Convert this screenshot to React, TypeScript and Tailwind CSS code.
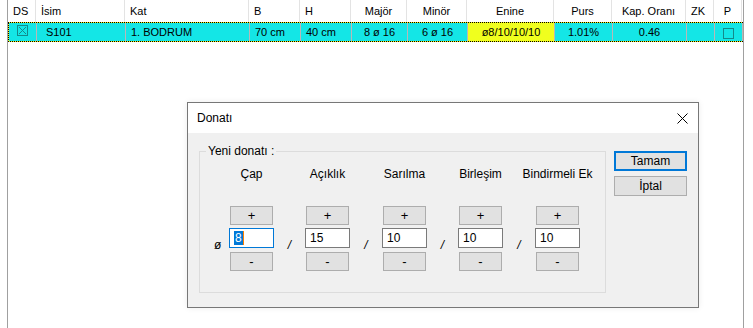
import React from 'react';

const cols = [
  { key: 'ds', title: 'DS', w: 'w-[28px]', align: 'left' },
  { key: 'isim', title: 'İsim', w: 'w-[89px]', align: 'left' },
  { key: 'kat', title: 'Kat', w: 'w-[124px]', align: 'left' },
  { key: 'b', title: 'B', w: 'w-[51px]', align: 'left' },
  { key: 'h', title: 'H', w: 'w-[51px]', align: 'left' },
  { key: 'major', title: 'Majör', w: 'w-[56px]', align: 'center' },
  { key: 'minor', title: 'Minör', w: 'w-[60px]', align: 'center' },
  { key: 'enine', title: 'Enine', w: 'w-[87px]', align: 'center' },
  { key: 'purs', title: 'Purs', w: 'w-[58px]', align: 'center' },
  { key: 'kap', title: 'Kap. Oranı', w: 'w-[74px]', align: 'center' },
  { key: 'zk', title: 'ZK', w: 'w-[28px]', align: 'left' },
  { key: 'p', title: 'P', w: 'w-[28px]', align: 'center' },
];

const row: Record<string, string> = {
  isim: 'S101',
  kat: '1. BODRUM',
  b: '70 cm',
  h: '40 cm',
  major: '8 ø 16',
  minor: '6 ø 16',
  enine: 'ø8/10/10/10',
  purs: '1.01%',
  kap: '0.46',
  zk: '',
};

const fields = [
  { label: 'Çap', value: '8', focus: true },
  { label: 'Açıklık', value: '15' },
  { label: 'Sarılma', value: '10' },
  { label: 'Birleşim', value: '10' },
  { label: 'Bindirmeli Ek', value: '10' },
];

function CheckBox({ crossed }: { crossed?: boolean }) {
  return (
    <svg width="11" height="11" viewBox="0 0 11 11" className="block">
      <rect x="0.5" y="0.5" width="10" height="10" fill="none" stroke="#138a8a" strokeWidth="1" />
      {crossed && (
        <path d="M2 2 L9 9 M9 2 L2 9" stroke="#138a8a" strokeWidth="1" />
      )}
    </svg>
  );
}

function SmallButton({ children }: { children: React.ReactNode }) {
  return (
    <div className="w-[43px] h-[19px] bg-[#e1e1e1] border border-[#adadad] flex items-center justify-center text-[13px] leading-none text-black">
      {children}
    </div>
  );
}

function Field({ label, value, focus }: { label: string; value: string; focus?: boolean }) {
  return (
    <div className="w-[45px] flex flex-col items-center">
      <div className="h-[16px] whitespace-nowrap text-[12px] leading-[16px]">{label}</div>
      <div className="mt-[24px]">
        <SmallButton>+</SmallButton>
      </div>
      <div
        className={`mt-[3px] w-[45px] h-[20px] bg-white border flex items-center pl-[4px] text-[12px] ${
          focus ? 'border-[#0078d7]' : 'border-[#7a7a7a]'
        }`}
      >
        {focus ? (
          <span className="flex items-center">
            <span className="bg-[#0078d7] text-white leading-[14px] px-px">{value}</span>
            <span className="w-px h-[14px] bg-[#ff8000]" />
          </span>
        ) : (
          value
        )}
      </div>
      <div className="mt-[4px]">
        <SmallButton>-</SmallButton>
      </div>
    </div>
  );
}

export default function App() {
  return (
    <div
      className="relative w-[753px] h-[328px] bg-white overflow-hidden text-black"
      style={{ fontFamily: '"Liberation Sans", Arial, sans-serif' }}
    >
      {/* grid */}
      <div className="ml-[7px] w-[737px] h-[328px] border-l border-r border-[#a0a0a0] text-[11px]">
        <div className="flex h-[22px]">
          {cols.map((c) => (
            <div
              key={c.key}
              className={`${c.w} shrink-0 h-full border-r border-[#e3e3e3] flex items-center px-[5px] ${
                c.align === 'center' ? 'justify-center' : ''
              }`}
            >
              {c.title}
            </div>
          ))}
        </div>
        <div className="flex h-[20px] bg-[#f4f414] border border-dotted border-black">
          {cols.map((c) => (
            <div
              key={c.key}
              className={`${c.w} shrink-0 h-full border-r border-[#b8b8b8] flex items-center px-[5px] ${
                c.align === 'center' ? 'justify-center' : ''
              } ${c.key === 'enine' ? 'bg-[#f0ff1e]' : 'bg-[#14e6e6]'} ${c.key === 'isim' ? 'pl-[9px]' : ''}`}
            >
              {c.key === 'ds' ? (
                <div className="pl-[3px] -mt-[3px]">
                  <CheckBox crossed />
                </div>
              ) : c.key === 'p' ? (
                <div className="mt-[3px]">
                  <CheckBox />
                </div>
              ) : (
                row[c.key]
              )}
            </div>
          ))}
        </div>
      </div>

      {/* dialog window */}
      <div className="absolute left-[187px] top-[102px] w-[512px] h-[206px] border border-[#777777] bg-[#f0f0f0] text-[12px] shadow-[0_0_6px_rgba(0,0,0,0.08)]">
        <div className="h-[30px] bg-white flex items-center justify-between pl-[9px] pr-[10px]">
          <span>Donatı</span>
          <svg width="11" height="11" viewBox="0 0 11 11">
            <path d="M0.5 0.5 L10.5 10.5 M10.5 0.5 L0.5 10.5" stroke="#000" strokeWidth="1" />
          </svg>
        </div>
        <div className="flex pl-[11px] pt-[11px]">
          <fieldset className="w-[407px] h-[149px] border border-[#dcdcdc] px-[0px]">
            <legend className="ml-[6px] px-[2px] leading-[14px]">Yeni donatı :</legend>
            <div className="flex items-start pt-[8px]">
              <div className="w-[29px] mt-[72px] pl-[14px] leading-[14px]">ø</div>
              {fields.map((f, i) => (
                <React.Fragment key={f.label}>
                  {i > 0 && (
                    <div
                      className={`${i % 2 === 1 ? 'w-[31px]' : 'w-[32px]'} mt-[72px] text-center leading-[14px] italic`}
                    >
                      /
                    </div>
                  )}
                  <Field {...f} />
                </React.Fragment>
              ))}
            </div>
          </fieldset>
          <div className="ml-[8px] mt-[7px] flex flex-col gap-[5px]">
            <div className="w-[73px] h-[20px] bg-[#e1e1e1] border-2 border-[#0078d7] flex items-center justify-center">
              Tamam
            </div>
            <div className="w-[73px] h-[20px] bg-[#e1e1e1] border border-[#adadad] flex items-center justify-center">
              İptal
            </div>
          </div>
        </div>
      </div>
    </div>
  );
}
